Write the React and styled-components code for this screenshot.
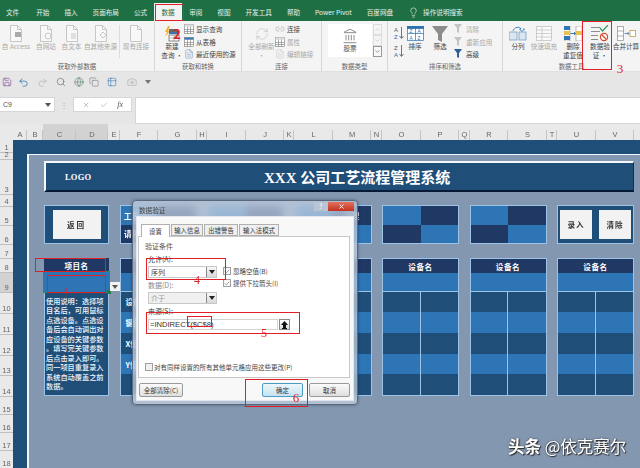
import React from 'react';
import styled, { createGlobalStyle } from 'styled-components';
import { Lightbulb, Undo2, Redo2, Save, Camera, Landmark, X, Check, ChevronDown, ChevronUp, FileText, Globe, Link2, Table2, RefreshCw, Search, Copy } from 'lucide-react';

const FONT = `"Noto Sans CJK SC", "Liberation Sans", sans-serif`;
const SERIF = `"Liberation Serif", "Noto Sans CJK SC", serif`;

const Global = createGlobalStyle`
  html, body { margin: 0; padding: 0; background: #8497b0; }
  * { box-sizing: border-box; }
`;

const Page = styled.div`
  position: relative; width: 640px; height: 468px; overflow: hidden;
  display: flex; flex-direction: column; font-family: ${FONT}; filter: blur(0.3px);
`;

/* ---------- title tabs ---------- */
const TabBar = styled.div`
  height: 21px; flex: none; background: #1f6f44; display: flex; align-items: center;
  padding: 3px 0 0 6px; color: #e8f1ec; font-size: 6.6px;
`;
const Tab = styled.span`
  margin-right: ${p => p.$gap ?? 15}px; white-space: nowrap; color: #e8f1ec;
`;
const ActiveTab = styled.span`
  background: #f3f3f3; color: #1f6f44; width: 28px; height: 18px; margin: 0 7px 0 -8px;
  align-self: flex-end; display: flex; align-items: center; justify-content: center;
`;
const Bulb = styled.span`
  display: inline-flex; margin-right: 4px; color: #e8f1ec;
`;

/* ---------- ribbon ---------- */
const Ribbon = styled.div`
  height: 51px; flex: none; background: #f4f4f4; display: flex; border-bottom: 1px solid #e0e0e0;
`;
const GroupBox = styled.div`
  width: ${p => p.$w}px; flex: none; display: flex; flex-direction: column;
  border-right: ${p => (p.$last ? 'none' : '1px solid #d6d6d6')};
`;
const GroupBody = styled.div`
  height: 40px; flex: none; padding: 4px 0 0 ${p => p.$pad ?? 0}px; display: flex; align-items: flex-start;
`;
const GroupLabel = styled.div`
  height: 8px; margin-top: 1px; font-size: 6.4px; line-height: 9px; text-align: center; color: #666;
`;
const Big = styled.div`
  width: ${p => p.$w}px; flex: none; display: flex; flex-direction: column; align-items: center;
  font-size: 6.6px; line-height: 9px; color: ${p => (p.$dim ? '#a8a8a8' : '#444')}; white-space: nowrap;
`;
const BigIcon = styled.div`
  height: 17px; display: flex; align-items: center; justify-content: center;
`;
const VSep = styled.div`
  width: 1px; height: 33px; background: #dcdcdc; margin: 0 ${p => p.$m ?? 1}px; flex: none;
`;
const SmallCol = styled.div`
  display: flex; flex-direction: column; margin: -2px 0 0 ${p => p.$ml ?? 0}px;
`;
const SortCol = styled.div`
  display: flex; flex-direction: column; gap: 4px; margin-top: 1px;
`;
const SmallRow = styled.div`
  height: 12.5px; display: flex; align-items: center; gap: 2px; font-size: 6.6px;
  color: ${p => (p.$dim ? '#a8a8a8' : '#444')}; white-space: nowrap;
`;
const StockBox = styled.div`
  width: 44px; height: 33px; background: #fff; margin: -1px 0 0 6px; display: flex; flex-direction: column;
  align-items: center; justify-content: center; font-size: 6.6px; color: #555; line-height: 9px;
`;
const Scroller = styled.div`
  width: 9px; height: 33px; margin: -1px 0 0 1px; display: flex; flex-direction: column;
`;
const ScrollBtn = styled.div`
  flex: 1; border: 1px solid ${p => (p.$on ? '#999' : '#ddd')}; display: flex; align-items: center; justify-content: center;
  color: ${p => (p.$on ? '#555' : '#c4c4c4')}; background: ${p => (p.$on ? '#fafafa' : 'transparent')};
`;

/* ---------- quick access and formula bar ---------- */
const Qat = styled.div`
  height: 20px; flex: none; background: #e6e6e6; display: flex; align-items: center; padding-left: 1px; color: #888;
`;
const QatItem = styled.span`
  width: ${p => p.$w ?? 18}px; display: flex; align-items: center; justify-content: center; color: ${p => p.$c ?? '#888'};
`;
const FormulaBand = styled.div`
  height: 32px; flex: none; background: #e6e6e6; display: flex; align-items: flex-start; padding-top: 5px;
`;
const NameBox = styled.div`
  width: 55px; height: 15px; background: #fff; border: 1px solid #d6d6d6; border-left: none; display: flex;
  align-items: center; justify-content: space-between; padding: 0 3px; font-size: 7px; color: #555;
  font-family: "Liberation Sans", sans-serif;
`;
const Dots = styled.div`
  width: 18px; text-align: center; color: #aaa; font-size: 8px; line-height: 15px;
`;
const FxBox = styled.div`
  width: 59px; height: 15px; background: #fff; border: 1px solid #d6d6d6; display: flex; align-items: center;
  justify-content: space-around; padding: 0 3px; color: #aaa;
`;
const Fx = styled.i`
  font-family: ${SERIF}; font-size: 8px; color: #555;
`;
const FormulaInput = styled.div`
  flex: 1; height: 27px; margin-left: 3px; background: #fff; border: 1px solid #d6d6d6; border-right: none;
`;

/* ---------- column headers ---------- */
const ColHeaders = styled.div`
  height: 16px; flex: none; background: #e9e9e9; display: flex;
`;
const Corner = styled.div`
  width: 13px; flex: none;
`;
const ColHead = styled.div`
  width: ${p => p.$w}px; flex: none; display: flex; align-items: flex-end; justify-content: center;
  padding-bottom: 1px; font-family: "Liberation Sans", sans-serif; font-size: 7.5px; color: #666;
  background: ${p => (p.$sel ? '#d2d2d2' : 'transparent')};
  position: relative;
  &::after { content: ''; position: absolute; right: 0; top: 6px; bottom: 0; width: 1px; background: #c4c4c4; }
`;

/* ---------- sheet ---------- */
const Body = styled.div`
  flex: 1; display: flex; min-height: 0;
`;
const RowHeaders = styled.div`
  width: 13px; flex: none; background: #e9e9e9; display: flex; flex-direction: column;
`;
const RowHead = styled.div`
  height: ${p => p.$h}px; flex: none; display: flex; align-items: flex-end; justify-content: center;
  font-family: "Liberation Sans", sans-serif; font-size: 7.5px; line-height: 9px; color: #666;
  border-bottom: 1px solid #bfbfbf; background: ${p => (p.$sel ? '#d2d2d2' : 'transparent')};
`;
const SheetBg = styled.div`
  flex: 1; background: #1f4e79; padding: 14px 0 0 14px; min-width: 0;
`;
const Board = styled.div`
  height: 100%; background: #8497b0; border-top: 1.5px solid #f2f5f9; border-left: 2px solid #f2f5f9;
  padding: 6px 6px 0 15px; display: flex; flex-direction: column;
`;
const TitleBar = styled.div`
  height: 31px; flex: none; background: #1f4e79; border-top: 2px solid #f5f7fa; border-left: 2px solid #f5f7fa;
  border-bottom: 2px solid #071a35; border-right: 1px solid #10325a; display: flex; align-items: center;
  position: relative; color: #fff;
`;
const Logo = styled.div`
  font-family: ${SERIF}; font-weight: bold; font-size: 8.5px; margin-left: 19px; width: 200px; letter-spacing: .2px;
`;
const Heading = styled.div`
  font-family: ${SERIF}; font-weight: bold; font-size: 15px; margin-left: -1px; white-space: nowrap;
`;
const Grid = styled.div`
  margin-top: 13px; display: grid; grid-template-columns: 65px repeat(6, 77px); column-gap: 10.5px;
  grid-template-rows: 39px 138px; row-gap: 14px;
`;
const ActionPanel = styled.div`
  background: #1f4e79; border: 1px solid #9dc3e6; display: flex; align-items: center; justify-content: ${p => p.$center ? 'center' : 'space-between'};
  padding: 0 ${p => (p.$center ? 0 : 2)}px;
`;
const WhiteBtn = styled.div`
  width: ${p => p.$w}px; height: 29px; background: #f2f2f2; color: #333; font-weight: bold; font-size: 7.6px;
  letter-spacing: ${p => p.$ls ?? 1}px; display: flex; align-items: center; justify-content: center;
`;
const Checker = styled.div`
  display: grid; grid-template-columns: 1fr 1fr; grid-template-rows: 1fr 1fr; border: 1px solid #9dc3e6;
`;
const CheckCell = styled.div`
  background: ${p => (p.$dark ? '#1f3864' : '#2e75b6')}; color: #fff; font-size: 7.6px; font-weight: bold;
  display: flex; align-items: center; justify-content: center; white-space: nowrap;
`;
const Column = styled.div`
  display: flex; flex-direction: column; border: 1px solid #9dc3e6; overflow: hidden;
`;
const ColTitle = styled.div`
  height: 14px; flex: none; background: #1f3864; color: #fff; font-size: 7.6px; font-weight: bold; letter-spacing: .6px;
  display: flex; align-items: center; justify-content: center;
`;
const InputRow = styled.div`
  height: 19px; flex: none; background: #2e75b6; border-bottom: 1px solid #9dc3e6;
`;
const SplitRow = styled.div`
  flex: ${p => p.$f ?? 1}; display: grid; grid-template-columns: 1fr 1fr; background: ${p => (p.$blue ? '#2e75b6' : '#1f4e79')};
`;
const SplitCell = styled.div`
  color: #fff; font-size: 7.6px; font-weight: bold; padding-left: 5px; display: flex; align-items: center;
  white-space: nowrap; overflow: hidden;
  &:first-child { border-right: 1px solid #9dc3e6; }
`;
const LeftStack = styled.div`
  display: flex; flex-direction: column; position: relative;
`;
const ProjectTitle = styled.div`
  height: 14px; flex: none; background: #1f3864; color: #fff; font-size: 7.6px; font-weight: bold;
  display: flex; align-items: center; justify-content: center; letter-spacing: .4px;
`;
const ActiveCell = styled.div`
  height: 20px; flex: none; background: #2e75b6; outline: 1.5px solid #2d8a55; position: relative;
`;
const Handle = styled.span`
  position: absolute; right: -2px; bottom: -2px; width: 4px; height: 4px; background: #1f7a45;
`;
const CellDrop = styled.span`
  position: absolute; left: 66px; top: 10px; width: 10px; height: 9px; background: #f2f2f2; color: #555;
  display: flex; align-items: center; justify-content: center;
`;
const Help = styled.div`
  flex: 1; background: #1f4e79; color: #f2f6fb; font-size: 7.2px; font-weight: 500; line-height: 9.45px;
  padding: 5px 0 0 1px; border: 1px solid #9dc3e6; border-top: none; white-space: nowrap;
`;
const HelpLine = styled.div``;

/* ---------- dialog ---------- */
const Dialog = styled.div`
  position: absolute; left: 132px; top: 200px; width: 226px; height: 205px; display: flex; flex-direction: column;
  background: rgba(196,208,224,.72); backdrop-filter: blur(4px);
  border: 1px solid #59687c; border-radius: 4px; padding: 0 3px 3px 3px; box-shadow: 0 0 3px rgba(20,30,60,.5);
`;
const DialogTop = styled.div`
  height: 15px; flex: none; display: flex; justify-content: space-between; align-items: flex-start;
  font-size: 6.6px; color: #444; position: relative;
`;
const DialogName = styled.span`
  margin: 4px 0 0 3px;
`;
const WinBtns = styled.div`
  display: flex; margin-top: 1px;
`;
const HelpBtn = styled.div`
  width: 14px; height: 9px; background: #b9c4d4; color: #fff; font-size: 7px; line-height: 9px; text-align: center;
`;
const CloseBtn = styled.div`
  width: 26px; height: 9px; background: linear-gradient(#e4705e, #c2331f); color: #fff; display: flex;
  align-items: center; justify-content: center;
`;
const DialogBody = styled.div`
  flex: 1; background: #f8f8f8; display: flex; flex-direction: column; padding-top: 7px; border: 1px solid #e4e8ee;
`;
const Tabs = styled.div`
  height: 12px; flex: none; display: flex; padding-left: 4px; gap: 1px;
`;
const DlgTab = styled.div`
  width: ${p => p.$w}px; height: ${p => (p.$on ? 13 : 12)}px; background: ${p => (p.$on ? '#fff' : '#efefef')}; border: 1px solid #b0b0b0;
  border-bottom: ${p => (p.$on ? 'none' : '1px solid #b0b0b0')}; font-size: 6.4px; color: #333;
  display: flex; align-items: center; justify-content: center; position: relative; z-index: 1; white-space: nowrap;
`;
const TabPanel = styled.div`
  height: 142px; flex: none; margin: 0 3px 0 1px; background: #fff; border: 1px solid #c8c8c8; padding: 5px 0 0 9px;
  font-size: 6.5px; color: #444;
`;
const FieldHead = styled.div`
  margin-left: -3px; line-height: 9px; height: 9px; color: #555; font-size: 7px;
`;
const Fields = styled.div`
  display: flex; margin-top: 4px;
`;
const FieldStack = styled.div`
  width: 69px; flex: none;
`;
const FieldLabel = styled.div`
  line-height: 8px; height: 8px; margin-top: ${p => p.$mt ?? 3}px; color: ${p => (p.$dim ? '#888' : '#444')}; font-size: 7px;
`;
const Select = styled.div`
  height: 12px; margin-top: 3px; display: flex; border: 1px solid #c8c8c8; background: ${p => (p.$dim ? '#f0f0f0' : '#fdfdfd')};
  color: ${p => (p.$dim ? '#999' : '#444')}; align-items: center; padding-left: 2px; justify-content: space-between; font-size: 7px;
`;
const SelectArrow = styled.span`
  width: 10px; height: 100%; background: linear-gradient(#f8f8f8, #d8d8d8); border-left: 1px solid #888; display: flex;
  align-items: center; justify-content: center; color: #222;
`;
const Checks = styled.div`
  margin-left: 6px; padding-top: 10px;
`;
const CheckRow = styled.div`
  height: 12px; display: flex; align-items: center; gap: ${p => p.$gap ?? 2}px; white-space: nowrap;
`;
const Box = styled.span`
  width: 8px; height: 8px; flex: none; background: ${p => (p.$off ? '#f0f0f0' : '#f8f8f8')}; border: 1px solid #a0a0a0;
  display: flex; align-items: center; justify-content: center; color: #555;
`;
const SourceRow = styled.div`
  display: flex; margin-top: 4px; height: 10px;
`;
const SourceInput = styled.div`
  width: 130px; height: 11px; background: #fff; border: 1px solid #d4d4d4; line-height: 9px; padding-left: 1px;
  font-family: "Liberation Sans", sans-serif; font-size: 7.6px; white-space: nowrap; color: #333;
`;
const UploadBtn = styled.div`
  width: 11px; height: 11px; margin-left: 1px; background: linear-gradient(#fdfdfd, #dcdcdc); border: 1px solid #888; display: flex;
  align-items: center; justify-content: center; color: #111;
`;
const ApplyAll = styled.div`
  margin: 32px 0 0 -3px;
`;
const DialogFoot = styled.div`
  flex: 1; display: flex; align-items: flex-start; padding: 5px 3px 0 2px; gap: 6px;
`;
const FootBtn = styled.div`
  width: ${p => p.$w}px; height: 14px; margin-left: ${p => p.$auto ? 'auto' : '0'}; border-radius: 2px; font-size: 6.5px; color: #333;
  background: ${p => (p.$primary ? 'linear-gradient(#eef7fb,#c5e2f0)' : 'linear-gradient(#fbfbfb,#dfdfdf)')};
  border: 1px solid ${p => (p.$primary ? '#4b9bc2' : '#9a9a9a')}; display: flex; align-items: center; justify-content: center;
  white-space: nowrap;
`;

/* ---------- annotations ---------- */
const RedBox = styled.div`
  position: absolute; left: ${p => p.$x}px; top: ${p => p.$y}px; width: ${p => p.$w}px; height: ${p => p.$h}px;
  border: ${p => p.$t ?? 1.5}px solid #e01f26; pointer-events: none;
`;
const Mark = styled.span`
  position: absolute; left: ${p => p.$x}px; top: ${p => p.$y}px; transform: translate(-50%, -50%);
  color: #e01f26; font-family: ${p => (p.$sans ? FONT : SERIF)}; font-size: ${p => p.$s ?? 12}px; font-weight: ${p => (p.$sans ? 'bold' : 'normal')}; line-height: 1;
`;
const Watermark = styled.div`
  position: absolute; left: 508px; top: 436px; color: #fff; font-size: 16.5px; line-height: 20px; white-space: nowrap;
  text-shadow: 1px 1px 1px #2a2a2a, 0 0 2px rgba(40,40,40,.8);
`;
const Strong = styled.b`
  font-weight: bold;
`;

/* ---------- drawn icons ---------- */
const Doc = ({ c = '#bbb', inner }) => (
  <svg width="14" height="17" viewBox="0 0 14 17" fill="none" stroke={c} strokeWidth=".8">
    <path d="M1.5.5h7l4 4v12h-11z" fill="#f8f8f8" /><path d="M8.5.5v4h4" />
    {inner}
  </svg>
);
const NewQuery = () => (
  <svg width="16" height="16" viewBox="0 0 16 16">
    <path d="M4 0 1 6h2L1 11l5-6H4l2-5z" fill="#f2b233" />
    <rect x="5" y="3" width="9" height="3" fill="#666" />
    <rect x="5" y="6" width="9" height="2" fill="#3e6fb0" />
    <rect x="5" y="9" width="10" height="6" fill="#fff" stroke="#555" strokeWidth=".7" />
    <path d="M5 12h10M10 9v6" stroke="#888" strokeWidth=".6" />
  </svg>
);
const SmallGrid = ({ c = '#3a78b5' }) => (
  <svg width="10" height="10" viewBox="0 0 10 10" fill="#fff" stroke="#777" strokeWidth=".6">
    <rect x=".5" y=".5" width="9" height="9" />
    <rect x=".5" y=".5" width="9" height="2.2" fill={c} stroke="none" />
    <path d="M.5 5.5h9M.5 7.5h9M3.5 2.5v7M6.5 2.5v7" />
  </svg>
);
const SortAZ = ({ rev }) => (
  <svg width="10" height="14" viewBox="0 0 10 14">
    <text x="0" y="6" fontSize="6" fontFamily="Liberation Sans" fill="#555">{rev ? 'Z' : 'A'}</text>
    <text x="0" y="13" fontSize="6" fontFamily="Liberation Sans" fill="#2a6db0">{rev ? 'A' : 'Z'}</text>
    <path d="M7.5 1v11M5.5 10l2 2.5 2-2.5" stroke="#555" strokeWidth=".8" fill="none" />
  </svg>
);
const SortBig = () => (
  <svg width="17" height="15" viewBox="0 0 17 15" stroke="#2a6db0" strokeWidth=".7">
    <rect x=".5" y=".5" width="16" height="14" fill="#fff" />
    <path d="M.5 7.5h16M8.5.5v14" />
    <rect x=".5" y=".5" width="16" height="2" fill="#2a6db0" />
    <text x="2.5" y="7" fontSize="4.8" fontFamily="Liberation Sans" fill="#2a6db0" stroke="none">Z</text>
    <text x="10.5" y="7" fontSize="4.8" fontFamily="Liberation Sans" fill="#2a6db0" stroke="none">A</text>
    <text x="2.5" y="13.5" fontSize="4.8" fontFamily="Liberation Sans" fill="#2a6db0" stroke="none">A</text>
    <text x="10.5" y="13.5" fontSize="4.8" fontFamily="Liberation Sans" fill="#2a6db0" stroke="none">Z</text>
  </svg>
);
const FunnelBig = () => (
  <svg width="16" height="16" viewBox="0 0 16 16"><path d="M0 0h16L10 8v8l-4-2V8z" fill="#8c8c8c" /></svg>
);
const FunnelSmall = ({ c = '#c4c4c4' }) => (
  <svg width="10" height="10" viewBox="0 0 10 10"><path d="M0 0h8L5 4v5L3 8V4z" fill={c} /></svg>
);
const SplitIcon = () => (
  <svg width="18" height="15" viewBox="0 0 18 15" fill="none">
    <rect x="0" y="6" width="8" height="8" fill="#dce6f2" stroke="#6a94bd" strokeWidth=".7" />
    <rect x="10" y="6" width="7" height="8" fill="#dce6f2" stroke="#6a94bd" strokeWidth=".7" />
    <path d="M4 5C5 1 11 0 12 3l-1.5 0 2.5 2.5L15.5 3H14" stroke="#2a78bd" strokeWidth=".9" />
  </svg>
);
const FlashIcon = () => (
  <svg width="16" height="15" viewBox="0 0 16 15" fill="#fafafa" stroke="#bdbdbd" strokeWidth=".7">
    <rect x=".5" y=".5" width="15" height="14" /><path d="M.5 4h15M.5 7.5h15M.5 11h15M6 .5v14" />
  </svg>
);
const DedupeIcon = () => (
  <svg width="18" height="15" viewBox="0 0 18 15">
    <rect x="0" y="0" width="6" height="15" fill="#fff" stroke="#777" strokeWidth=".5" />
    <rect x="0" y="0" width="6" height="4" fill="#2e75b6" />
    <rect x="0" y="5" width="6" height="4" fill="#e8c24a" />
    <rect x="0" y="10" width="6" height="4" fill="#2e75b6" />
    <rect x="12" y="0" width="6" height="15" fill="#fff" stroke="#777" strokeWidth=".5" />
    <rect x="12" y="5" width="6" height="4" fill="#e8c24a" />
    <path d="M6.5 7.5h5M10 6l1.6 1.5L10 9" stroke="#2a6db0" strokeWidth=".9" fill="none" />
  </svg>
);
const ValidationIcon = () => (
  <svg width="18" height="17" viewBox="0 0 18 17" fill="none">
    <path d="M0 2.5h9M0 6.5h9M0 10.5h7M0 14.5h7" stroke="#8c8c8c" strokeWidth="1.1" />
    <path d="M9 3l2.5 3L17 0" stroke="#2f9a5b" strokeWidth="1.2" />
    <circle cx="13" cy="12" r="3.6" stroke="#d8472b" strokeWidth="1.2" fill="#fff" />
    <path d="M10.5 9.5l5 5" stroke="#d8472b" strokeWidth="1.2" />
  </svg>
);
const MergeIcon = () => (
  <svg width="19" height="15" viewBox="0 0 19 15" fill="none" stroke="#8a8a8a" strokeWidth=".7">
    <rect x=".5" y=".5" width="6" height="14" fill="#fff" /><path d="M.5 5h6M.5 10h6" />
    <rect x="13" y="4.5" width="5.5" height="6" fill="#fff" stroke="#c58a35" />
    <path d="M7.5 7.5h4.5M10.5 6l1.5 1.5L10.5 9" stroke="#2a6db0" />
  </svg>
);
const TinyDown = () => (
  <svg width="6" height="4" viewBox="0 0 6 4"><path d="M0 0h6L3 4z" fill="currentColor" /></svg>
);
const UpArrow = () => (
  <svg width="7" height="8" viewBox="0 0 7 8"><path d="M3.5 0 7 4H5v3H2V4H0z" fill="currentColor" /><path d="M1 7.5h5" stroke="currentColor" /></svg>
);

/* ---------- data ---------- */
const cols = [['A', 14], ['B', 16], ['C', 33, true], ['D', 32, true], ['E', 12], ['F', 38], ['G', 39], ['H', 10], ['I', 39], ['J', 38], ['K', 10], ['L', 39], ['M', 38], ['N', 11], ['O', 39], ['P', 38], ['Q', 11], ['R', 38], ['S', 39], ['T', 10], ['U', 39], ['V', 38], ['W', 20]];
const rows = [[1, 13], [2, 7], [3, 35], [4, 12], [5, 19], [6, 19], [7, 14], [8, 14], [9, 20, true], [10, 21], [11, 21], [12, 21], [13, 20], [14, 21], [15, 18], [16, 18], [17, 18], [18, 18]];
const help = ['使用说明：选择项', '目名后，可用鼠标', '点选设备。点选设', '备后会自动调出对', '应设备的关键参数', '。填写完关键参数', '后点击录入即可。', '同一项目重复录入', '系统自动覆盖之前', '数据。'];
const splitRows = [[20, false], [22, true], [21, false], [21, true], [21, false]];

const Group = ({ w, label, pad, last, children }) => (
  <GroupBox $w={w} $last={last}>
    <GroupBody $pad={pad}>{children}</GroupBody>
    <GroupLabel>{label}</GroupLabel>
  </GroupBox>
);
const BigBtn = ({ w, dim, icon, lines }) => (
  <Big $w={w} $dim={dim}>
    <BigIcon>{icon}</BigIcon>
    {lines.map(l => <span key={l}>{l}</span>)}
  </Big>
);

const DeviceColumn = ({ title = '设备名', labels = [] }) => (
  <Column>
    <ColTitle>{title}</ColTitle>
    <InputRow />
    {splitRows.map(([f, blue], i) => (
      <SplitRow key={i} $f={f} $blue={blue}>
        <SplitCell>{labels[i]}</SplitCell>
        <SplitCell />
      </SplitRow>
    ))}
  </Column>
);
const CheckerPanel = ({ a, b, c }) => (
  <Checker>
    <CheckCell>{a}</CheckCell>
    <CheckCell $dark>{c}</CheckCell>
    <CheckCell $dark>{b}</CheckCell>
    <CheckCell />
  </Checker>
);

export default function App() {
  return (
    <>
      <Global />
      <Page>
        <TabBar>
          <Tab $gap={17}>文件</Tab>
          <Tab>开始</Tab>
          <Tab>插入</Tab>
          <Tab>页面布局</Tab>
          <Tab>公式</Tab>
          <ActiveTab>数据</ActiveTab>
          <Tab>审阅</Tab>
          <Tab>视图</Tab>
          <Tab>开发工具</Tab>
          <Tab>帮助</Tab>
          <Tab>Power Pivot</Tab>
          <Tab>百度网盘</Tab>
          <Bulb><Lightbulb size={11} strokeWidth={1.4} /></Bulb>
          <Tab>操作说明搜索</Tab>
        </TabBar>

        <Ribbon>
          <Group w={155} label="获取外部数据">
            <BigBtn w={32} dim lines={['自 Access']} icon={<Doc inner={<rect x="6" y="7" width="6" height="5" fill="#aaa" stroke="none" />} />} />
            <BigBtn w={28} dim lines={['自网站']} icon={<Doc inner={<circle cx="9" cy="11" r="3" />} />} />
            <BigBtn w={23} dim lines={['自文本']} icon={<Doc inner={<path d="M6 9h5M6 11h5M6 13h5" />} />} />
            <BigBtn w={35} dim lines={['自其他来源']} icon={<Doc inner={<path d="M9 7l3 3-3 3-3-3z" />} />} />
            <VSep />
            <BigBtn w={30} dim lines={['现有连接']} icon={<Doc />} />
          </Group>
          <Group w={87} label="获取和转换" pad={5}>
            <BigBtn w={24} lines={['新建', '查询 ·']} icon={<NewQuery />} />
            <SmallCol>
              <SmallRow><SmallGrid c="#ddd" />显示查询</SmallRow>
              <SmallRow><SmallGrid />从表格</SmallRow>
              <SmallRow><FileText size={10} strokeWidth={1} color="#3a78b5" />最近使用的源</SmallRow>
            </SmallCol>
          </Group>
          <Group w={80} label="连接" pad={6}>
            <BigBtn w={27} dim lines={['全部刷新', '·']} icon={<RefreshCw size={14} strokeWidth={1} color="#bbb" />} />
            <SmallCol>
              <SmallRow><Link2 size={10} strokeWidth={1} color="#888" />连接</SmallRow>
              <SmallRow $dim><SmallGrid c="#ddd" />属性</SmallRow>
              <SmallRow $dim><FileText size={10} strokeWidth={1} color="#bbb" />编辑链接</SmallRow>
            </SmallCol>
          </Group>
          <Group w={66} label="数据类型">
            <StockBox>
              <Landmark size={16} strokeWidth={1} color="#555" />
              股票
            </StockBox>
            <Scroller>
              <ScrollBtn><ChevronUp size={7} /></ScrollBtn>
              <ScrollBtn><ChevronDown size={7} /></ScrollBtn>
              <ScrollBtn $on><ChevronDown size={7} /></ScrollBtn>
            </Scroller>
          </Group>
          <Group w={115} label="排序和筛选" pad={6}>
            <SortCol>
              <SortAZ />
              <SortAZ rev />
            </SortCol>
            <BigBtn w={22} lines={['排序']} icon={<SortBig />} />
            <BigBtn w={28} lines={['筛选']} icon={<FunnelBig />} />
            <SmallCol>
              <SmallRow $dim><FunnelSmall />清除</SmallRow>
              <SmallRow $dim><FunnelSmall />重新应用</SmallRow>
              <SmallRow><FunnelSmall c="#2a5f97" />高级</SmallRow>
            </SmallCol>
          </Group>
          <Group w={137} label="数据工具" pad={3} last>
            <BigBtn w={24} lines={['分列']} icon={<SplitIcon />} />
            <BigBtn w={28} dim lines={['快速填充']} icon={<FlashIcon />} />
            <BigBtn w={30} lines={['删除', '重复值']} icon={<DedupeIcon />} />
            <BigBtn w={24} lines={['数据验', '证 ·']} icon={<ValidationIcon />} />
            <BigBtn w={28} lines={['合并计算']} icon={<MergeIcon />} />
          </Group>
        </Ribbon>

        <Qat>
          <QatItem $c="#7a3f98" $w={12}><Save size={10} strokeWidth={1.4} /></QatItem>
          <QatItem $c="#2a6db0" $w={20}><Undo2 size={11} strokeWidth={1.6} /></QatItem>
          <QatItem $c="#b5b5b5" $w={18}><Redo2 size={11} strokeWidth={1.6} /></QatItem>
          <QatItem $w={20}><Search size={10} strokeWidth={1.3} color="#555" /></QatItem>
          <QatItem $w={16} $c="#4f7f63"><Globe size={10} strokeWidth={1.4} /></QatItem>
          <QatItem $w={14}><Copy size={10} strokeWidth={1.2} color="#666" /></QatItem>
          <QatItem $w={22} $c="#2a6db0"><Table2 size={10} strokeWidth={1.2} /></QatItem>
          <QatItem $w={18} $c="#999"><Camera size={10} strokeWidth={1.2} /></QatItem>
          <QatItem $w={14} $c="#777"><TinyDown /></QatItem>
        </Qat>

        <FormulaBand>
          <NameBox>C9<TinyDown /></NameBox>
          <Dots>⋮</Dots>
          <FxBox><X size={8} /><Check size={8} /><Fx>fx</Fx></FxBox>
          <FormulaInput />
        </FormulaBand>

        <ColHeaders>
          <Corner />
          {cols.map(([n, w, s]) => <ColHead key={n} $w={w} $sel={s}>{n}</ColHead>)}
        </ColHeaders>

        <Body>
          <RowHeaders>
            {rows.map(([n, h, s]) => <RowHead key={n} $h={h} $sel={s}>{n}</RowHead>)}
          </RowHeaders>
          <SheetBg>
            <Board>
              <TitleBar>
                <Logo>LOGO</Logo>
                <Heading>XXX 公司工艺流程管理系统</Heading>
              </TitleBar>
              <Grid>
                <ActionPanel $center><WhiteBtn $w={48} $ls={2}>返回</WhiteBtn></ActionPanel>
                <CheckerPanel a="工艺名称" b="请先选择" />
                <CheckerPanel />
                <CheckerPanel c="管理" />
                <CheckerPanel />
                <CheckerPanel />
                <ActionPanel>
                  <WhiteBtn $w={32}>录入</WhiteBtn>
                  <WhiteBtn $w={32}>清除</WhiteBtn>
                </ActionPanel>

                <LeftStack>
                  <ProjectTitle>项目名</ProjectTitle>
                  <ActiveCell>
                    <Handle />
                    <CellDrop><TinyDown /></CellDrop>
                  </ActiveCell>
                  <Help>{help.map(l => <HelpLine key={l}>{l}</HelpLine>)}</Help>
                </LeftStack>
                <DeviceColumn labels={['设备', '键值', 'X值', 'Y值']} />
                <DeviceColumn />
                <DeviceColumn />
                <DeviceColumn />
                <DeviceColumn />
                <DeviceColumn />
              </Grid>
            </Board>
          </SheetBg>
        </Body>

        <Dialog>
          <DialogTop>
            <DialogName>数据验证</DialogName>
            <WinBtns>
              <HelpBtn>?</HelpBtn>
              <CloseBtn><X size={7} strokeWidth={3} /></CloseBtn>
            </WinBtns>
          </DialogTop>
          <DialogBody>
            <Tabs>
              <DlgTab $on $w={29}>设置</DlgTab>
              <DlgTab $w={32}>输入信息</DlgTab>
              <DlgTab $w={34}>出错警告</DlgTab>
              <DlgTab $w={40}>输入法模式</DlgTab>
            </Tabs>
            <TabPanel>
              <FieldHead>验证条件</FieldHead>
              <Fields>
                <FieldStack>
                  <FieldLabel $mt={0}>允许(A):</FieldLabel>
                  <Select>序列<SelectArrow><TinyDown /></SelectArrow></Select>
                  <FieldLabel $dim>数据(D):</FieldLabel>
                  <Select $dim>介于<SelectArrow><TinyDown /></SelectArrow></Select>
                </FieldStack>
                <Checks>
                  <CheckRow><Box><Check size={7} strokeWidth={2} /></Box>忽略空值(B)</CheckRow>
                  <CheckRow><Box><Check size={7} strokeWidth={2} /></Box>提供下拉箭头(I)</CheckRow>
                </Checks>
              </Fields>
              <FieldLabel>来源(S):</FieldLabel>
              <SourceRow>
                <SourceInput>=INDIRECT($C$8)</SourceInput>
                <UploadBtn><UpArrow /></UploadBtn>
              </SourceRow>
              <ApplyAll>
                <CheckRow $gap={1}><Box $off />对有同样设置的所有其他单元格应用这些更改(P)</CheckRow>
              </ApplyAll>
            </TabPanel>
            <DialogFoot>
              <FootBtn $w={44}>全部清除(C)</FootBtn>
              <FootBtn $w={41} $auto $primary>确定</FootBtn>
              <FootBtn $w={41}>取消</FootBtn>
            </DialogFoot>
          </DialogBody>
        </Dialog>

        <RedBox $x={155} $y={4} $w={29} $h={17} />
        <RedBox $x={582} $y={21} $w={30} $h={49} />
        <RedBox $x={35} $y={258} $w={71} $h={14} />
        <RedBox $x={47} $y={275} $w={59} $h={18} />
        <RedBox $x={146} $y={258} $w={80} $h={22} />
        <RedBox $x={146} $y={312} $w={154} $h={22} />
        <RedBox $x={187} $y={316} $w={25} $h={11} $t={1} />
        <RedBox $x={245} $y={379} $w={63} $h={28} />
        <Mark $x={66} $y={291} $s={9}>1</Mark>
        <Mark $x={177} $y={33} $s={13} $sans>2</Mark>
        <Mark $x={620} $y={68} $s={13}>3</Mark>
        <Mark $x={197} $y={280} $s={12}>4</Mark>
        <Mark $x={264} $y={333} $s={12}>5</Mark>
        <Mark $x={296} $y={397} $s={13}>6</Mark>

        <Watermark><Strong>头条</Strong> @依克赛尔</Watermark>
      </Page>
    </>
  );
}
